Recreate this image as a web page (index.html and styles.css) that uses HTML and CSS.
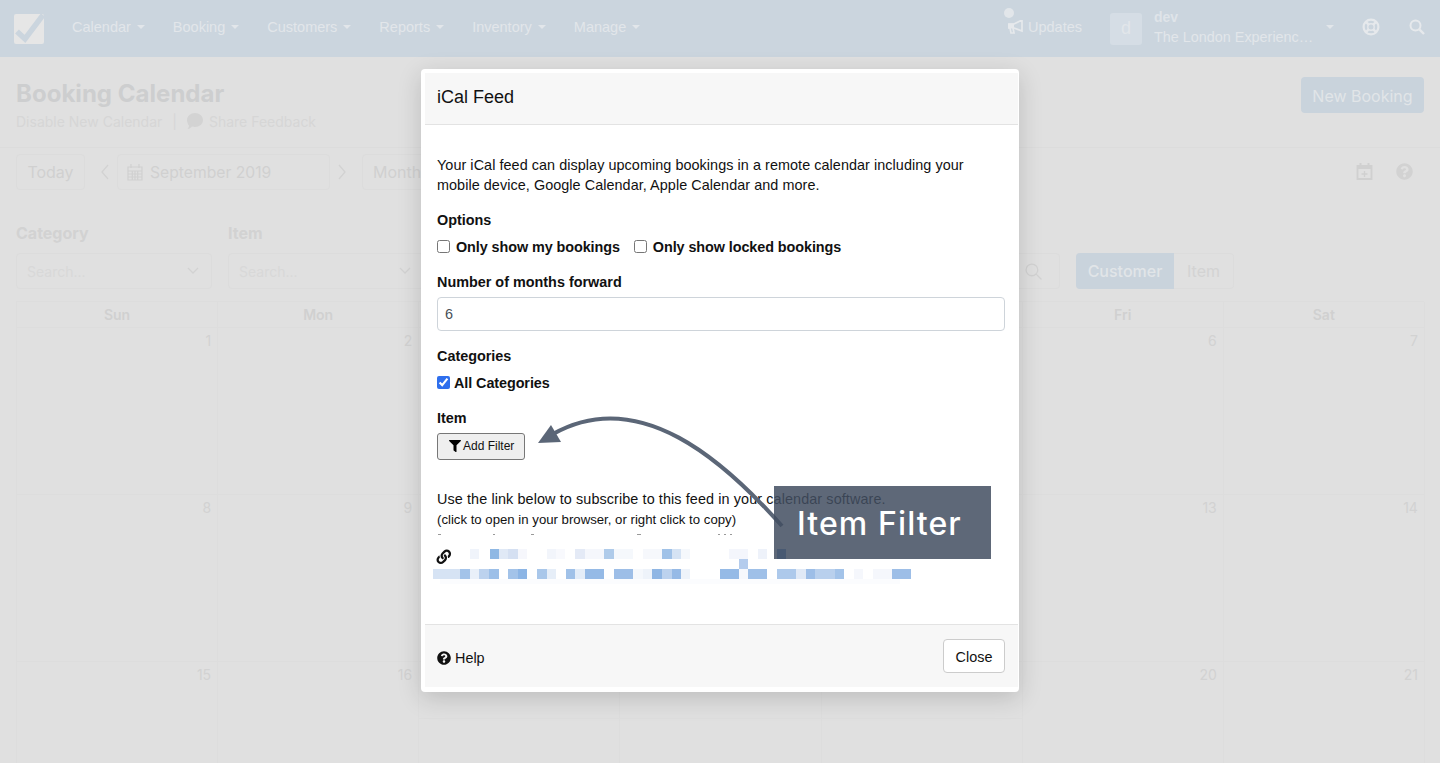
FILE: index.html
```html
<!DOCTYPE html>
<html lang="en">
<head>
<meta charset="utf-8">
<title>Booking Calendar</title>
<link rel="stylesheet" href="styles.css">
</head>
<body>
<div class="page">
  <nav class="navbar">
    <svg class="logo" viewBox="0 0 30 30"><rect width="30" height="30" rx="2" fill="#e6e6e6"/><path d="M3 17.5 L11 25 L29 1" fill="none" stroke="#cbd5de" stroke-width="5.5"/></svg>
    <ul class="menu">
      <li class="menu-item">Calendar<i class="caret"></i></li>
      <li class="menu-item">Booking<i class="caret"></i></li>
      <li class="menu-item">Customers<i class="caret"></i></li>
      <li class="menu-item">Reports<i class="caret"></i></li>
      <li class="menu-item">Inventory<i class="caret"></i></li>
      <li class="menu-item">Manage<i class="caret"></i></li>
    </ul>
    <div class="updates">
      <span class="dot"></span>
      <svg class="bullhorn" viewBox="0 0 16 14"><path d="M1 4h5l8-4v11L6 8H5l1 5H3L2 8H1z" fill="none" stroke="#e6e9ec" stroke-width="1.7"/><path d="M0 3.5h6V8.5H0z" fill="#e6e9ec"/></svg>
      <span>Updates</span>
    </div>
    <div class="avatar">d</div>
    <div class="account">
      <strong class="account-name">dev</strong>
      <span class="account-org">The London Experienc…</span>
    </div>
    <i class="caret account-caret"></i>
    <svg class="nav-icon help-ring" viewBox="0 0 18 18"><circle cx="9" cy="9" r="7.4" fill="none" stroke="#e6e9ec" stroke-width="2.2"/><circle cx="9" cy="9" r="3.2" fill="none" stroke="#e6e9ec" stroke-width="1.4"/><path d="M3.5 3.5l3.2 3.2M14.5 3.5l-3.2 3.2M3.5 14.5l3.2-3.2M14.5 14.5l-3.2-3.2" stroke="#e6e9ec" stroke-width="2.4"/></svg>
    <svg class="nav-icon search-icon" viewBox="0 0 16 16"><circle cx="6.5" cy="6.5" r="5" fill="none" stroke="#e6e9ec" stroke-width="2"/><path d="M10.3 10.3l4.7 4.7" stroke="#e6e9ec" stroke-width="2.4"/></svg>
  </nav>

  <header class="page-head">
    <div>
      <h1 class="title">Booking Calendar</h1>
      <div class="sub">
        <span>Disable New Calendar</span>
        <span class="sep">|</span>
        <svg class="bubble" viewBox="0 0 16 16"><path d="M8 0c4.400 0 8 3 8 7s-3.600 7-8 7c-1 0-2-.2-3-.5C4 14.500 2.500 16 .5 16 1.500 15 2 13.500 2 12.500.8 11.200 0 9.200 0 7c0-4 3.600-7 8-7z" fill="#d3d3d3"/></svg>
        <span>Share Feedback</span>
      </div>
    </div>
    <button class="primary-btn">New Booking</button>
  </header>

  <section class="toolbar">
    <div class="box today">Today</div>
    <svg class="chev" viewBox="0 0 10 18"><path d="M8 2L2 9l6 7" fill="none" stroke="#d2d2d2" stroke-width="1.3"/></svg>
    <div class="box date">
      <svg class="cal" viewBox="0 0 16 17"><path d="M1 3h14v13H1zM1 7h14M4 0v4M12 0v4M5.300 7v9M8 7v9M10.700 7v9M1 10h14M1 13h14" fill="none" stroke="#d0d0d0" stroke-width="1.200"/></svg>
      <span class="date-text">September 2019</span>
    </div>
    <svg class="chev" viewBox="0 0 10 18"><path d="M2 2l6 7-6 7" fill="none" stroke="#d2d2d2" stroke-width="1.3"/></svg>
    <div class="box month">Month</div>
    <svg class="tool-icon add-cal" viewBox="0 0 16 17"><path d="M1 3h14v13H1z" fill="none" stroke="#d0d0d0" stroke-width="1.800"/><path d="M1 3h14v3H1zM3 0h2v4H3zM11 0h2v4h-2zM7.300 8h1.400v6H7.300zM5 10.300h6v1.400H5z" fill="#d0d0d0"/></svg>
    <svg class="tool-icon help-dot" viewBox="0 0 512 512"><path fill="#d2d2d2" d="M504 256c0 136.997-111.043 248-248 248S8 392.997 8 256C8 119.083 119.043 8 256 8s248 111.083 248 248zM262.655 90c-54.497 0-89.255 22.957-116.549 63.758-3.536 5.286-2.353 12.415 2.715 16.258l34.699 26.31c5.205 3.947 12.621 3.008 16.665-2.122 17.864-22.658 30.113-35.797 57.303-35.797 20.429 0 45.698 13.148 45.698 32.958 0 14.976-12.363 22.667-32.534 33.976C247.128 238.528 216 254.941 216 296v4c0 6.627 5.373 12 12 12h56c6.627 0 12-5.373 12-12v-1.333c0-28.462 83.186-29.647 83.186-106.667 0-58.002-60.165-102-116.531-102zM256 338c-25.365 0-46 20.635-46 46 0 25.364 20.635 46 46 46s46-20.636 46-46c0-25.365-20.635-46-46-46z"/></svg>
  </section>

  <section class="filters">
    <div class="field">
      <label class="field-label">Category</label>
      <div class="box select"><span>Search...</span><svg class="down" viewBox="0 0 12 8"><path d="M1 1l5 5 5-5" fill="none" stroke="#d2d2d2" stroke-width="1.300"/></svg></div>
    </div>
    <div class="field">
      <label class="field-label">Item</label>
      <div class="box select"><span>Search...</span><svg class="down" viewBox="0 0 12 8"><path d="M1 1l5 5 5-5" fill="none" stroke="#d2d2d2" stroke-width="1.300"/></svg></div>
    </div>
    <div class="box searchbox"><svg class="lens" viewBox="0 0 16 16"><circle cx="6.500" cy="6.500" r="5.500" fill="none" stroke="#d2d2d2" stroke-width="1.200"/><path d="M10.500 10.500l5 5" stroke="#d2d2d2" stroke-width="1.200"/></svg></div>
    <div class="toggle"><span class="toggle-on">Customer</span><span class="toggle-off">Item</span></div>
  </section>

  <section class="calendar">
    <div class="day-name">Sun</div><div class="day-name">Mon</div><div class="day-name">Tue</div><div class="day-name">Wed</div><div class="day-name">Thu</div><div class="day-name">Fri</div><div class="day-name">Sat</div>
    <div class="cell">1</div><div class="cell">2</div><div class="cell">3</div><div class="cell">4</div><div class="cell">5</div><div class="cell">6</div><div class="cell">7</div>
    <div class="cell">8</div><div class="cell">9</div><div class="cell">10</div><div class="cell">11</div><div class="cell">12</div><div class="cell">13</div><div class="cell">14</div>
    <div class="cell">15</div><div class="cell">16</div><div class="cell lined">17</div><div class="cell lined">18</div><div class="cell lined">19</div><div class="cell">20</div><div class="cell">21</div>
  </section>
</div>

<div class="modal">
  <div class="modal-head">iCal Feed</div>
  <div class="modal-body">
    <p class="intro">Your iCal feed can display upcoming bookings in a remote calendar including your mobile device, Google Calendar, Apple Calendar and more.</p>
    <div class="label">Options</div>
    <div class="checks">
      <label class="check"><input type="checkbox"><span>Only show my bookings</span></label>
      <label class="check"><input type="checkbox"><span>Only show locked bookings</span></label>
    </div>
    <div class="label">Number of months forward</div>
    <input class="text-input" type="text" value="6">
    <div class="label">Categories</div>
    <div class="checks">
      <label class="check tight"><input type="checkbox" checked><span>All Categories</span></label>
    </div>
    <div class="label">Item</div>
    <button class="filter-btn">
      <svg class="filter-icon" viewBox="0 0 512 512"><path d="M487.976 0H24.028C2.71 0-8.047 25.866 7.058 40.971L192 225.941V432c0 7.831 3.821 15.170 10.237 19.662l80 55.980C298.020 518.690 320 507.493 320 487.980V225.941l184.947-184.970C520.021 25.896 509.338 0 487.976 0z"/></svg>
      <span>Add Filter</span>
    </button>
    <p class="use-link">Use the link below to subscribe to this feed in your calendar software.</p>
    <p class="hint">(click to open in your browser, or right click to copy)</p>
    <svg class="redacted" viewBox="425 530 500 60" width="500" height="60">
      <path fill="#111" transform="translate(436.500 549.500) scale(.0285)" d="M326.612 185.391c59.747 59.809 58.927 155.698.36 214.590-.11.12-.24.25-.36.37l-67.200 67.200c-59.270 59.270-155.699 59.262-214.960 0-59.270-59.260-59.270-155.700 0-214.960l37.106-37.106c9.840-9.840 26.786-3.300 27.294 10.606.648 17.722 3.826 35.527 9.690 52.721 1.986 5.822.567 12.262-3.783 16.612l-13.087 13.087c-28.026 28.026-28.905 73.660-1.155 101.960 28.024 28.579 74.086 28.749 102.325.51l67.200-67.190c28.191-28.191 28.073-73.757 0-101.830-3.701-3.694-7.429-6.564-10.341-8.569a16.037 16.037 0 0 1-6.947-12.606c-.396-10.567 3.348-21.456 11.698-29.806l21.054-21.055c5.521-5.521 14.182-6.199 20.584-1.731a152.482 152.482 0 0 1 20.522 17.197zM467.547 44.449c-59.261-59.262-155.690-59.270-214.960 0l-67.200 67.200c-.12.12-.25.25-.36.37-58.566 58.892-59.387 154.781.36 214.590a152.454 152.454 0 0 0 20.521 17.196c6.402 4.468 15.064 3.789 20.584-1.731l21.054-21.055c8.350-8.350 12.094-19.239 11.698-29.806a16.037 16.037 0 0 0-6.947-12.606c-2.912-2.005-6.640-4.875-10.341-8.569-28.073-28.073-28.191-73.639 0-101.830l67.200-67.190c28.239-28.239 74.300-28.069 102.325.51 27.750 28.300 26.872 73.934-1.155 101.960l-13.087 13.087c-4.350 4.350-5.769 10.790-3.783 16.612 5.864 17.194 9.042 34.999 9.690 52.721.509 13.906 17.454 20.446 27.294 10.606l37.106-37.106c59.271-59.259 59.271-155.699.001-214.959z"/>
      <g fill="#999"><rect x="438" y="534" width="3" height="1"/><rect x="493" y="534" width="2" height="1"/><rect x="531" y="534" width="3" height="1"/><rect x="637" y="534" width="4" height="1"/><rect x="718" y="534" width="2" height="1"/><rect x="724" y="534" width="2" height="1"/><rect x="730" y="534" width="2" height="1"/></g>
      <g>
        <rect x="470" y="549" width="9" height="10" fill="#f0f4fb"/><rect x="490" y="549" width="9" height="10" fill="#8fb8e4"/><rect x="499" y="549" width="9" height="10" fill="#e0e9f6"/><rect x="508" y="549" width="10" height="10" fill="#d5e0f2"/><rect x="518" y="549" width="9" height="10" fill="#f6f7fc"/><rect x="547" y="549" width="9" height="10" fill="#f2f5fb"/><rect x="556" y="549" width="9" height="10" fill="#f8f9fd"/><rect x="575" y="549" width="10" height="10" fill="#e4eaf6"/><rect x="585" y="549" width="19" height="10" fill="#f5f7fc"/><rect x="604" y="549" width="10" height="10" fill="#afcbea"/><rect x="614" y="549" width="19" height="10" fill="#f5f8fc"/><rect x="643" y="549" width="19" height="10" fill="#f6f8fc"/><rect x="662" y="549" width="10" height="10" fill="#a0c2e8"/><rect x="672" y="549" width="9" height="10" fill="#d5e3f4"/><rect x="681" y="549" width="9" height="10" fill="#f5f8fc"/><rect x="729" y="549" width="19" height="10" fill="#f4f6fc"/><rect x="758" y="549" width="9" height="10" fill="#eef2fa"/><rect x="777" y="549" width="9" height="10" fill="#6f9ad6"/>
        <rect x="739" y="559" width="9" height="10" fill="#b4cced"/>
        <rect x="433" y="569" width="27" height="10" fill="#d6e3f4"/><rect x="460" y="569" width="10" height="10" fill="#a3c3e9"/><rect x="470" y="569" width="9" height="10" fill="#e9f0f9"/><rect x="479" y="569" width="10" height="10" fill="#bcd2ee"/><rect x="489" y="569" width="10" height="10" fill="#9cbfe8"/><rect x="508" y="569" width="10" height="10" fill="#a3c3e9"/><rect x="518" y="569" width="9" height="10" fill="#8cb5e5"/><rect x="537" y="569" width="10" height="10" fill="#a9c7ea"/><rect x="547" y="569" width="9" height="10" fill="#e6eef8"/><rect x="566" y="569" width="9" height="10" fill="#a0c1e8"/><rect x="575" y="569" width="10" height="10" fill="#e4edf8"/><rect x="585" y="569" width="19" height="10" fill="#95bae6"/><rect x="614" y="569" width="19" height="10" fill="#9dbee7"/><rect x="633" y="569" width="10" height="10" fill="#f5f8fc"/><rect x="643" y="569" width="9" height="10" fill="#eef3fa"/><rect x="652" y="569" width="10" height="10" fill="#8fb6e4"/><rect x="662" y="569" width="10" height="10" fill="#bcd2ee"/><rect x="672" y="569" width="9" height="10" fill="#96bae6"/><rect x="681" y="569" width="9" height="10" fill="#eef3fa"/><rect x="720" y="569" width="19" height="10" fill="#95bae6"/><rect x="739" y="569" width="9" height="10" fill="#f6f8fc"/><rect x="748" y="569" width="19" height="10" fill="#9fc0e8"/><rect x="777" y="569" width="19" height="10" fill="#adc9eb"/><rect x="796" y="569" width="10" height="10" fill="#e0e9f6"/><rect x="806" y="569" width="9" height="10" fill="#9dbee7"/><rect x="815" y="569" width="20" height="10" fill="#b9d0ed"/><rect x="835" y="569" width="9" height="10" fill="#a3c3e9"/><rect x="854" y="569" width="9" height="10" fill="#f5f7fc"/><rect x="873" y="569" width="19" height="10" fill="#f5f7fc"/><rect x="892" y="569" width="19" height="10" fill="#9dbee7"/>
        <rect x="440" y="579" width="460" height="5" fill="#fbfcfe"/>
      </g>
    </svg>
  </div>
  <div class="modal-foot">
    <span class="help">
      <svg class="help-icon" viewBox="0 0 512 512"><path fill="#111" d="M504 256c0 136.997-111.043 248-248 248S8 392.997 8 256C8 119.083 119.043 8 256 8s248 111.083 248 248zM262.655 90c-54.497 0-89.255 22.957-116.549 63.758-3.536 5.286-2.353 12.415 2.715 16.258l34.699 26.310c5.205 3.947 12.621 3.008 16.665-2.122 17.864-22.658 30.113-35.797 57.303-35.797 20.429 0 45.698 13.148 45.698 32.958 0 14.976-12.363 22.667-32.534 33.976C247.128 238.528 216 254.941 216 296v4c0 6.627 5.373 12 12 12h56c6.627 0 12-5.373 12-12v-1.333c0-28.462 83.186-29.647 83.186-106.667 0-58.002-60.165-102-116.531-102zM256 338c-25.365 0-46 20.635-46 46 0 25.364 20.635 46 46 46s46-20.636 46-46c0-25.365-20.635-46-46-46z"/></svg>
      <span>Help</span>
    </span>
    <button class="close-btn">Close</button>
  </div>
</div>

<svg class="arrow" viewBox="0 0 1440 763">
  <path d="M782 526C725 462 640 385 553 434" fill="none" stroke="#5b6677" stroke-width="4"/>
  <path d="M538 443L551 425L561 442z" fill="#5b6677"/>
</svg>
<div class="callout">Item Filter</div>
</body>
</html>
```
FILE: styles.css
```css
* { box-sizing: border-box; }
html, body { margin: 0; height: 100%; overflow: hidden; }
body { background: #e0e0e0; font-family: "Liberation Sans", Arial, sans-serif; color: #d2d2d2; position: relative; }
.page { height: 763px; overflow: hidden; }

.navbar { height: 57px; background: #cbd5de; display: flex; align-items: center; padding: 0 14px 3px; color: #e2e6ea; font-size: 14.5px; }
.logo { width: 30px; height: 30px; flex: none; margin: 3px 28px 0 0; }
.menu { list-style: none; display: flex; margin: 0; padding: 0; gap: 28px; }
.menu-item { display: flex; align-items: center; white-space: nowrap; }
.caret { display: inline-block; width: 0; height: 0; margin-left: 6px; border: 4px solid transparent; border-top-color: #e2e6ea; border-bottom: 0; }
.updates { margin-left: auto; display: flex; align-items: center; gap: 4px; position: relative; margin-right: 28px; }
.dot { position: absolute; left: -4px; top: -11px; width: 10px; height: 10px; border-radius: 50%; background: #e2e6ea; }
.bullhorn { width: 16px; height: 14px; }
.avatar { width: 32px; height: 32px; background: #d5dde5; border-radius: 3px; display: flex; align-items: center; justify-content: center; font-size: 18px; margin: 3px 12px 0 0; }
.account { display: flex; flex-direction: column; line-height: 20px; width: 170px; white-space: nowrap; }
.account-name { font-weight: 700; font-size: 14px; color: #dfe4e9; }
.account-org { font-size: 14.4px; }
.account-caret { margin: 0 0 0 2px; }
.nav-icon { width: 18px; height: 18px; flex: none; }
.help-ring { margin-left: 28px; }
.search-icon { width: 16px; height: 16px; margin-left: 29px; margin-right: 1px; }

.page-head { height: 91px; padding: 20px 16px 0; display: flex; justify-content: space-between; align-items: flex-start; border-bottom: 1px solid #dcdcdc; font-family: Inter, sans-serif; }
.title { margin: 1px 0 0; font-size: 24px; line-height: 32px; font-weight: 700; color: #cdcecf; letter-spacing: .03px; }
.sub { display: flex; align-items: center; font-size: 14px; margin-top: 1px; height: 20px; color: #d6d6d6; }
.sep { margin: 0 10px; }
.bubble { width: 16px; height: 16px; margin-right: 6px; }
.primary-btn { width: 123px; height: 36px; padding: 1px 0 0; background: #c9d3dc; color: #e1e5e8; border: 0; border-radius: 4px; font: 16px Inter, sans-serif; }

.toolbar { height: 48px; padding: 6px 16px 0; display: flex; align-items: flex-start; font-family: Inter, sans-serif; font-size: 16px; color: #d0d0d0; }
.box { border: 1px solid #dcdcdc; border-radius: 4px; height: 36px; display: flex; align-items: center; }
.today { width: 69px; justify-content: center; }
.chev { width: 10px; height: 18px; margin: 9px 7px 0; flex: none; }
.chev:first-of-type { margin-left: 15px; }
.date { width: 213px; padding-left: 9px; gap: 7px; }
.date-text { font-size: 15.7px; }
.cal { width: 16px; height: 17px; }
.month { width: 100px; padding-left: 10px; margin-left: 8px; }
.tool-icon { flex: none; width: 17px; height: 17px; margin-top: 9px; }
.add-cal { margin-left: auto; margin-right: 23px; }
.help-dot { margin-right: 11px; }

.filters { padding: 0 16px; display: flex; gap: 16px; font-family: Inter, sans-serif; align-items: flex-start; margin-top: 27px; height: 79px; }
.field { width: 196px; flex: none; }
.field-label { display: block; font-weight: 700; font-size: 16px; line-height: 20px; margin: 0 0 10px; color: #d2d2d2; }
.select { padding: 0 12px 0 10px; justify-content: space-between; font-size: 14px; color: #d8d8d8; }
.down { width: 12px; height: 8px; }
.searchbox { flex: 1; margin-top: 30px; justify-content: flex-end; padding-right: 17px; }
.lens { width: 17px; height: 17px; }
.toggle { margin-top: 30px; width: 158px; height: 36px; display: flex; border: 1px solid #dcdcdc; border-left: 0; border-radius: 4px; margin-right: 190px; font-size: 16px; flex: none; }
.toggle-on { width: 98px; background: #c9d3dc; color: #e1e5e8; font-weight: 500; display: flex; align-items: center; justify-content: center; border-radius: 4px 0 0 4px; margin-top: -1px; margin-bottom: -1px; }
.toggle-off { flex: 1; display: flex; align-items: center; justify-content: center; color: #d3d3d3; }

.calendar { display: grid; grid-template-columns: repeat(7, 201.14px); grid-template-rows: 26px 167px 167px 167px; margin: -1px 16px 0; font-family: Inter, sans-serif; border-top: 1px solid #dddddd; border-left: 1px solid #dddddd; }
.day-name { text-align: center; font-weight: 600; font-size: 14px; line-height: 25px; border-right: 1px solid #dddddd; border-bottom: 1px solid #dddddd; color: #d0d0d0; }
.cell { text-align: right; font-size: 14px; padding: 4px 6px; line-height: 17px; border-right: 1px solid #dddddd; border-bottom: 1px solid #dddddd; color: #d2d2d2; }
.lined { background: linear-gradient(#dddddd, #dddddd) 0 56px / 100% 1px no-repeat; }

.modal { position: absolute; left: 421px; top: 69px; width: 598px; height: 623px; background: #fff; border-radius: 4px; padding: 4px 1px 5px 4px; box-shadow: 0 6px 24px rgba(0, 0, 0, .16); display: flex; flex-direction: column; color: #111; font-size: 14.4px; }
.modal-head { height: 52px; background: #f7f7f7; border-bottom: 1px solid #e3e3e3; padding-left: 12px; display: flex; align-items: center; font-size: 18px; flex: none; padding-bottom: 3px; }
.modal-body { flex: 1; padding: 30px 14px 0 12px; line-height: 20px; }
.intro { margin: 0 0 15px; letter-spacing: .06px; }
.label { font-weight: 700; line-height: 20px; }
.checks { display: flex; gap: 14px; margin: 7px 0 15px; font-weight: 700; letter-spacing: -.08px; }
.check { display: flex; align-items: center; gap: 6px; }
.check.tight { gap: 4px; }
.check input { width: 13px; height: 13px; margin: 0; accent-color: #2f6fed; position: relative; top: -1px; }
.text-input { display: block; width: 568px; height: 34px; margin: 5px 0 15px; padding: 0 7px; border: 1px solid #ced4da; border-radius: 4px; font: 14.4px "Liberation Sans", Arial, sans-serif; color: #495057; background: #fff; }
.filter-btn { display: flex; align-items: center; gap: 2px; width: 88px; height: 27px; margin-top: 5px; padding: 0 0 1px 11px; background: #efefef; border: 1px solid #777; border-radius: 3px; font: 12px "Liberation Sans", Arial, sans-serif; color: #111; }
.filter-icon { width: 12px; height: 12px; flex: none; }
.use-link { margin: 29px 0 0; letter-spacing: .1px; }
.hint { margin: 1px 0 0; font-size: 13.2px; }
.redacted { display: block; margin: 0 0 0 -12px; }
.modal-foot { height: 63px; background: #f7f7f7; border-top: 1px solid #e3e3e3; display: flex; align-items: center; justify-content: space-between; padding: 0 13px 0 12px; flex: none; }
.help { display: flex; align-items: center; gap: 4px; margin-top: 4px; }
.help-icon { width: 14px; height: 14px; }
.close-btn { width: 62px; height: 34px; padding-top: 2px; background: #fff; border: 1px solid #ccc; border-radius: 4px; font: 14.4px "Liberation Sans", Arial, sans-serif; color: #111; }

.arrow { position: absolute; left: 0; top: 0; width: 1440px; height: 763px; pointer-events: none; }
.callout { position: absolute; left: 774px; top: 486px; width: 217px; height: 73px; padding: 2px 0 0 23px; background: rgba(66, 78, 96, .85); color: #fff; font-family: Inter, sans-serif; font-weight: 500; font-size: 32px; letter-spacing: 1.1px; display: flex; align-items: center; }
```
